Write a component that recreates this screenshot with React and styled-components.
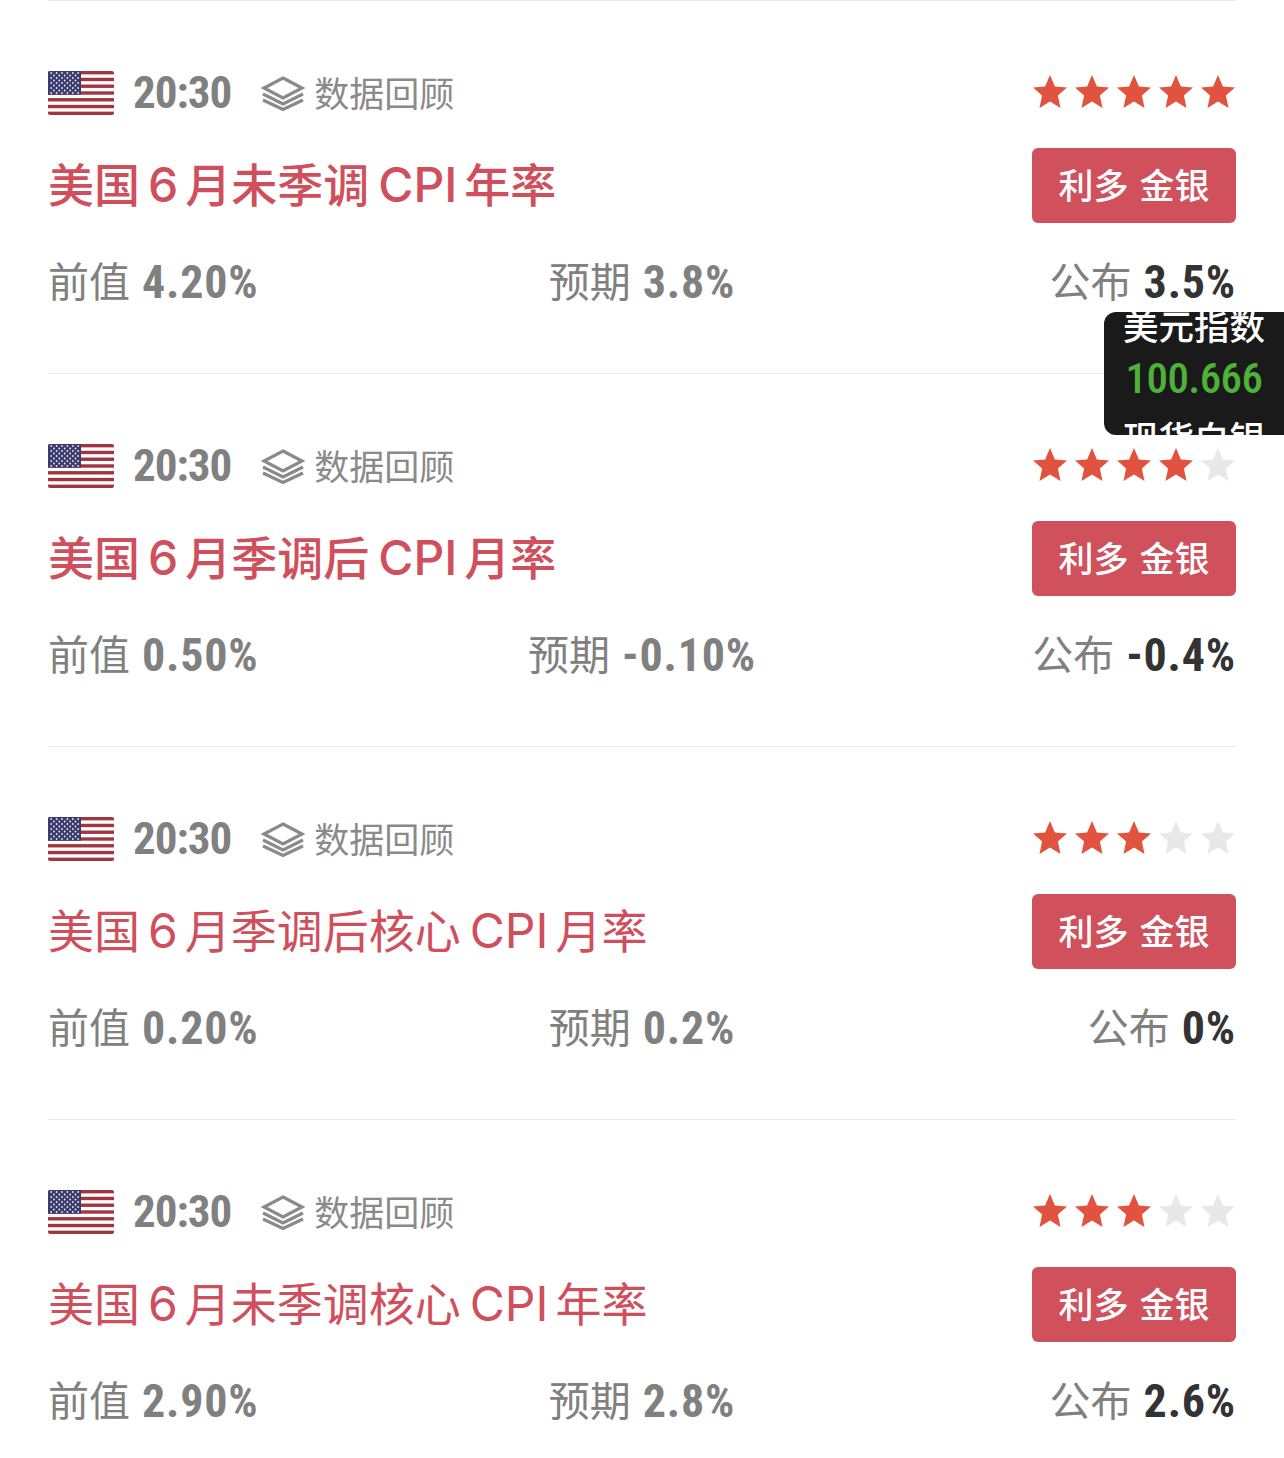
import React from "react";
import styled, { createGlobalStyle } from "styled-components";

const Global = createGlobalStyle`
  html, body { margin: 0; padding: 0; background: #fff; }
  body { font-family: Roboto, "Noto Sans CJK SC", sans-serif; }
`;

const CJK = `"Noto Sans CJK SC", sans-serif`;
const NUM = `Roboto, "Noto Sans CJK SC", sans-serif`;

const Page = styled.div`
  position: relative;
  height: 1458px;
  overflow: hidden;
  padding: 0 48px;
  box-sizing: border-box;
`;
const Item = styled.section`
  height: 373px;
  box-sizing: border-box;
  border-top: 1px solid #e9e9e9;
  padding-top: 70px;
`;
const TopRow = styled.div`
  display: flex;
  align-items: center;
  height: 44px;
`;
const FlagBox = styled.svg`
  width: 66px;
  height: 44px;
  flex: none;
  border-radius: 2px;
`;
const Digits = styled.span`
  display: inline-block;
  font-family: ${NUM};
  font-weight: 700;
  font-stretch: 75%;
`;
const Time = styled(Digits)`
  margin-left: 19px;
  font-size: 45px;
  line-height: 44px;
  letter-spacing: -1px;
  color: #808080;
`;
const Review = styled.span`
  display: flex;
  align-items: center;
  margin-left: 30px;
  gap: 9px;
  font: 400 35px/44px ${CJK};
  color: #8a8a8a;
`;
const ReviewText = styled.span`
  padding-bottom: 2px;
`;
const Stars = styled.div`
  margin-left: auto;
  display: flex;
  gap: 8px;
  margin-right: 1px;
  margin-bottom: 3px;
`;
const TitleRow = styled.div`
  display: flex;
  align-items: center;
  justify-content: space-between;
  margin-top: 33px;
  height: 75px;
`;
const Title = styled.h2`
  margin: 0;
  padding-bottom: 4px;
  font-family: ${CJK};
  font-size: 46px;
  line-height: 75px;
  font-weight: ${(p) => (p.$bold ? 500 : 400)};
  color: #cf4f5c;
  white-space: pre;
`;
const Latin = styled.span`
  font-family: Inter, sans-serif;
  font-size: 48px;
  margin: 0 ${(p) => p.$r}px 0 ${(p) => p.$l}px;
`;
const Tag = styled.div`
  width: 204px;
  height: 75px;
  box-sizing: border-box;
  padding-bottom: 4px;
  background: #d0505c;
  border-radius: 6px;
  display: flex;
  align-items: center;
  justify-content: center;
  color: #fff;
  font: 500 35px/71px ${CJK};
  word-spacing: 3px;
  white-space: pre;
`;
const Values = styled.div`
  display: grid;
  grid-template-columns: 1fr auto 1fr;
  align-items: center;
  margin-top: 31px;
  height: 56px;
`;
const Cell = styled.div`
  display: flex;
  align-items: center;
  gap: 12px;
  justify-content: ${(p) => p.$justify || "flex-start"};
`;
const Label = styled.span`
  padding-bottom: 6px;
  font: 400 41px/50px ${CJK};
  color: #808080;
`;
const Num = styled(Digits)`
  font-size: 46px;
  line-height: 50px;
  letter-spacing: 0.8px;
  color: ${(p) => (p.$dark ? "#333" : "#808080")};
`;
const Ticker = styled.aside`
  position: absolute;
  right: 0;
  top: 312px;
  width: 180px;
  height: 123px;
  background: #1a1a1a;
  border-radius: 12px 0 0 12px;
  overflow: hidden;
  display: flex;
  flex-direction: column;
  align-items: center;
`;
const TickerName = styled.div`
  flex: none;
  font: 500 35.5px/50px ${CJK};
  color: #fff;
  margin-top: ${(p) => p.$mt}px;
`;
const TickerPrice = styled(Digits)`
  flex: none;
  font-size: 43px;
  font-weight: 500;
  line-height: 50px;
  letter-spacing: -0.6px;
  color: #4fb13a;
  margin-top: 3px;
`;

const Flag = () => {
  const stars = [];
  for (let r = 0; r < 9; r++) {
    const n = r % 2 ? 5 : 6;
    for (let c = 0; c < n; c++) {
      stars.push(
        <circle key={`${r}-${c}`} cx={(r % 2 ? 3.2 : 0.5) + 2.7 + c * 5.4} cy={2 + r * 2.5} r="0.9" fill="#e6e6f0" />
      );
    }
  }
  return (
    <FlagBox viewBox="0 0 66 44" preserveAspectRatio="none">
      <rect width="66" height="44" fill="#fff" />
      {Array.from({ length: 7 }, (_, i) => (
        <rect key={i} x="0" y={i * 6.77} width="66" height="3.38" fill="#a0363f" />
      ))}
      <rect width="33" height="23.7" fill="#3c3b6e" />
      {stars}
    </FlagBox>
  );
};

const Layers = () => (
  <svg width="44" height="35" viewBox="0 0 44 35" fill="none" stroke="#8a8a8a" strokeWidth="3.2" strokeLinejoin="miter">
    <path d="M22 2 L41 12 L22 22 L3 12 Z" />
    <path d="M2 18 L22 28 L42 18" />
    <path d="M2 24 L22 33.5 L42 24" />
  </svg>
);

const Star = ({ on }) => (
  <svg width="34" height="33" viewBox="0 0 34 33">
    <path
      d="M17 0 L21.9 11.4 L34 12.5 L24.9 20.6 L27.5 33 L17 26.6 L6.5 33 L9.1 20.6 L0 12.5 L12.1 11.4 Z"
      fill={on ? "#e2533f" : "#e8e8e8"}
    />
  </svg>
);

const data = [
  { title: ["美国", "6", "月未季调", "CPI", "年率"], bold: true, stars: 5, prev: "4.20%", exp: "3.8%", act: "3.5%" },
  { title: ["美国", "6", "月季调后", "CPI", "月率"], bold: true, stars: 4, prev: "0.50%", exp: "-0.10%", act: "-0.4%" },
  { title: ["美国", "6", "月季调后核心", "CPI", "月率"], stars: 3, prev: "0.20%", exp: "0.2%", act: "0%" },
  { title: ["美国", "6", "月未季调核心", "CPI", "年率"], stars: 3, prev: "2.90%", exp: "2.8%", act: "2.6%" },
];

export default function App() {
  return (
    <Page>
      <Global />
      {data.map((d, i) => (
        <Item key={i}>
          <TopRow>
            <Flag />
            <Time>20:30</Time>
            <Review>
              <Layers />
              <ReviewText>数据回顾</ReviewText>
            </Review>
            <Stars>
              {[0, 1, 2, 3, 4].map((s) => (
                <Star key={s} on={s < d.stars} />
              ))}
            </Stars>
          </TopRow>
          <TitleRow>
            <Title $bold={d.bold}>
              {d.title[0]}
              <Latin $l={8} $r={7}>{d.title[1]}</Latin>
              {d.title[2]}
              <Latin $l={9} $r={7}>{d.title[3]}</Latin>
              {d.title[4]}
            </Title>
            <Tag>利多 金银</Tag>
          </TitleRow>
          <Values>
            <Cell>
              <Label>前值</Label>
              <Num>{d.prev}</Num>
            </Cell>
            <Cell>
              <Label>预期</Label>
              <Num>{d.exp}</Num>
            </Cell>
            <Cell $justify="flex-end">
              <Label>公布</Label>
              <Num $dark>{d.act}</Num>
            </Cell>
          </Values>
        </Item>
      ))}
      <Ticker>
        <TickerName $mt={-12}>美元指数</TickerName>
        <TickerPrice>100.666</TickerPrice>
        <TickerName $mt={9}>现货白银</TickerName>
      </Ticker>
    </Page>
  );
}
